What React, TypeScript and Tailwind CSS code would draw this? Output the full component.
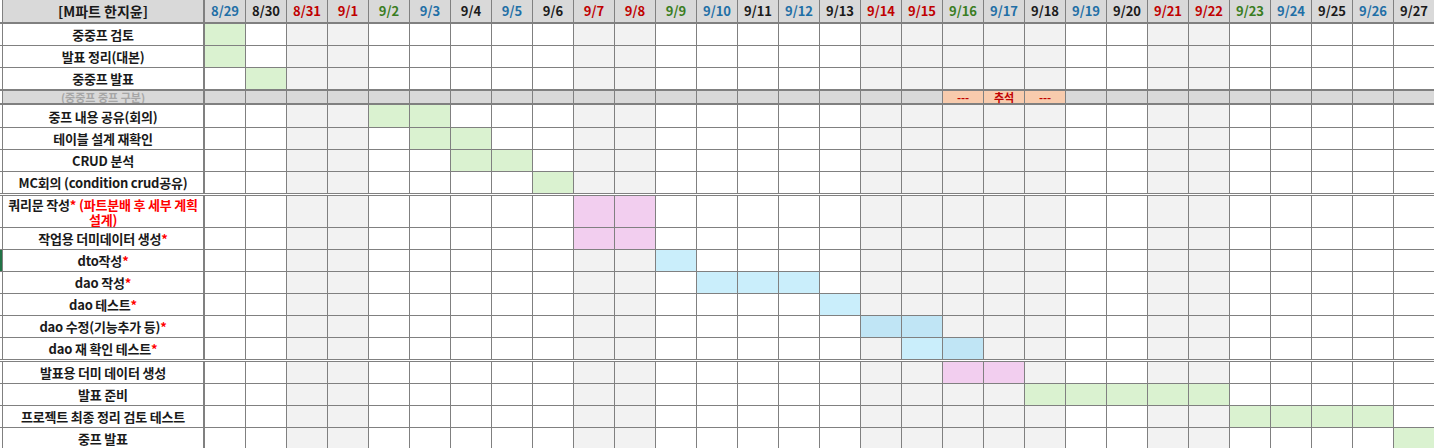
import type { ReactNode } from "react";

const DATES = [
  "8/29", "8/30", "8/31", "9/1", "9/2", "9/3", "9/4", "9/5", "9/6", "9/7",
  "9/8", "9/9", "9/10", "9/11", "9/12", "9/13", "9/14", "9/15", "9/16", "9/17",
  "9/18", "9/19", "9/20", "9/21", "9/22", "9/23", "9/24", "9/25", "9/26", "9/27",
];

// 요일 글자색 순서 (8/29 부터 7일 주기)
const DAY_COLORS = [
  "text-[#1f6fa6]",
  "text-[#1a1a1a]",
  "text-[#c00000]",
  "text-[#c00000]",
  "text-[#3a7d22]",
  "text-[#1f6fa6]",
  "text-[#1a1a1a]",
];

// 주말 + 추석 연휴 칸
const OFF = new Set([2, 3, 9, 10, 16, 17, 18, 19, 20, 23, 24]);

const G = "bg-[#daf2d0]";
const P = "bg-[#f2ceef]";
const B = "bg-[#caeefb]";
const BD = "bg-[#c0e5f5]";

const Star = () => <span className="text-[#ff0000]">*</span>;

type Row = {
  label: ReactNode;
  h: string;
  fills: Record<number, string>;
  marker?: boolean;
};

const range = (a: number, b: number, c: string) => {
  const r: Record<number, string> = {};
  for (let i = a; i <= b; i++) r[i] = c;
  return r;
};

const TOP: Row[] = [
  { label: "중중프 검토", h: "h-[22px] border-b", fills: { 0: G } },
  { label: "발표 정리(대본)", h: "h-[22px] border-b", fills: { 0: G } },
  { label: "중중프 발표", h: "h-[23px] border-b-2", fills: { 1: G } },
];

const MID: Row[] = [
  { label: "중프 내용 공유(회의)", h: "h-[23px] border-b", fills: range(4, 5, G) },
  { label: "테이블 설계 재확인", h: "h-[22px] border-b", fills: range(5, 6, G) },
  { label: "CRUD 분석", h: "h-[22px] border-b", fills: range(6, 7, G) },
  {
    label: "MC회의 (condition crud공유)",
    h: "h-[24px] border-b-[3px] border-double",
    fills: { 8: G },
  },
  {
    label: (
      <>
        쿼리문 작성<Star />{" "}
        <span className="text-[#ff0000]">(파트분배 후 세부 계획</span>
        <br />
        <span className="text-[#ff0000]">설계)</span>
      </>
    ),
    h: "h-[32px] border-b",
    fills: range(9, 10, P),
  },
  { label: <>작업용 더미데이터 생성<Star /></>, h: "h-[22px] border-b", fills: range(9, 10, P) },
  { label: <>dto작성<Star /></>, h: "h-[22px] border-b", fills: { 11: B }, marker: true },
  { label: <>dao 작성<Star /></>, h: "h-[22px] border-b", fills: range(12, 14, B) },
  { label: <>dao 테스트<Star /></>, h: "h-[22px] border-b", fills: { 15: B } },
  { label: <>dao 수정(기능추가 등)<Star /></>, h: "h-[22px] border-b", fills: range(16, 17, BD) },
  {
    label: <>dao 재 확인 테스트<Star /></>,
    h: "h-[24px] border-b-[3px] border-double",
    fills: { 17: B, 18: BD },
  },
  { label: "발표용 더미 데이터 생성", h: "h-[22px] border-b", fills: range(18, 19, P) },
  { label: "발표 준비", h: "h-[22px] border-b", fills: range(20, 24, G) },
  { label: "프로젝트 최종 정리 검토 테스트", h: "h-[22px] border-b", fills: range(25, 28, G) },
  { label: "중프 발표", h: "h-[22px] border-b", fills: { 29: G } },
];

function LeftCell({ children, marker, bg = "bg-white" }: { children: ReactNode; marker?: boolean; bg?: string }) {
  return (
    <div className="flex h-full w-[205px] shrink-0">
      <div className={`h-full w-[2px] ${marker ? "bg-[#217346]" : "bg-white"}`} />
      <div
        className={`flex h-full w-[203px] items-center justify-center overflow-hidden border-l border-r-2 border-[#808080] text-center ${bg}`}
      >
        {children}
      </div>
    </div>
  );
}

function TaskRow({ row }: { row: Row }) {
  return (
    <div className={`flex ${row.h} border-[#808080]`}>
      <LeftCell marker={row.marker}>
        <p className="text-[13px] leading-[15px] font-bold whitespace-nowrap tracking-[-0.2px] text-[#1a1a1a]">
          {row.label}
        </p>
      </LeftCell>
      {DATES.map((_, i) => (
        <div
          key={i}
          className={`h-full w-[41px] shrink-0 border-r border-[#808080] ${
            row.fills[i] ?? (OFF.has(i) ? "bg-[#f2f2f2]" : "bg-white")
          }`}
        />
      ))}
    </div>
  );
}

export default function App() {
  return (
    <div className="h-[448px] w-[1434px] overflow-hidden bg-white font-['Noto_Sans_CJK_KR',sans-serif]">
      <div className="w-[1435px]">
        {/* 헤더 */}
        <div className="flex h-[24px] border-b-2 border-[#808080]">
          <LeftCell bg="bg-[#d9d9d9]">
            <span className="text-[14px] leading-[16px] font-bold text-[#1a1a1a]">[M파트 한지윤]</span>
          </LeftCell>
          {DATES.map((d, i) => (
            <div
              key={d}
              className={`flex h-full w-[41px] shrink-0 items-center justify-center border-r border-[#808080] bg-[#d9d9d9] text-[13px] leading-[16px] font-bold ${DAY_COLORS[i % 7]}`}
            >
              {d}
            </div>
          ))}
        </div>

        {TOP.map((r, i) => (
          <TaskRow key={i} row={r} />
        ))}

        {/* 구분 행 */}
        <div className="flex h-[14px] border-b-2 border-[#808080]">
          <LeftCell bg="bg-[#d9d9d9]">
            <span className="text-[11px] leading-[12px] font-bold text-[#a6a6a6]">(중중프 중프 구분)</span>
          </LeftCell>
          {DATES.map((d, i) => {
            const holiday = i >= 18 && i <= 20;
            return (
              <div
                key={d}
                className={`flex h-full w-[41px] shrink-0 items-center justify-center border-r border-[#808080] text-[11px] leading-[12px] font-bold text-[#c00000] ${
                  holiday ? "bg-[#f8cbad]" : "bg-[#d9d9d9]"
                }`}
              >
                {i === 19 ? "추석" : holiday ? "---" : ""}
              </div>
            );
          })}
        </div>

        {MID.map((r, i) => (
          <TaskRow key={i} row={r} />
        ))}
      </div>
    </div>
  );
}
